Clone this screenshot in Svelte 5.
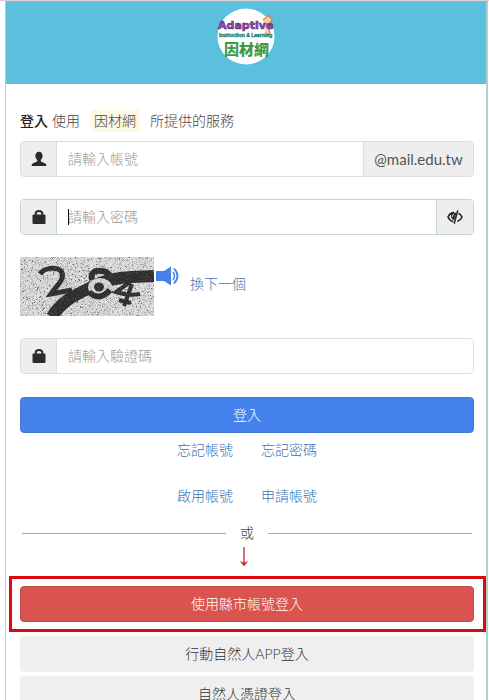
<script>
  let account = $state('');
  let password = $state('');
  let captcha = $state('');

  // Seeded speckle pattern behind and over the verification digits.
  function speckle(count, start) {
    let s = start;
    const next = () => (s = (s * 16807) % 2147483647) / 2147483647;
    for (let i = 0; i < 9; i++) next();
    let d = '';
    for (let i = 0; i < count; i++) {
      d += `M${Math.floor(next() * 134)} ${Math.floor(next() * 59)}h1v1h-1z`;
    }
    return d;
  }
  const layers = [
    { d: speckle(2600, 71), fill: '#c6c6c6' },
    { d: speckle(2400, 9917), fill: '#e6e6e6' },
    { d: speckle(500, 40503), fill: '#a6a6a6' }
  ];
  const darkDots = speckle(230, 8123);
  const inkDots = speckle(800, 55511);
</script>

{#snippet lock()}
  <svg width="14" height="16" viewBox="0 0 14 16" aria-hidden="true">
    <path d="M3.700 7V4.400Q3.700 1.900 7 1.900T10.300 4.400V7" fill="none" stroke="#2b2b2b" stroke-width="2" />
    <rect x="0.500" y="5.500" width="13" height="9.500" rx="1" fill="#2b2b2b" />
  </svg>
{/snippet}

<div class="page">
  <main class="card">
    <header>
      <svg width="60" height="58" viewBox="0 0 60 58" role="img" aria-label="因材網">
        <ellipse cx="30" cy="28.500" rx="28.500" ry="28" fill="#fff" />
        <path d="M47 12l5-4 4 3-2 4 2 3-3 3 1 4-4 3" fill="#f8cfaa" stroke="#dc8a50" stroke-width="1.400" />
        <text class="brand" x="2" y="21">Adaptive</text>
        <text class="tag" x="3" y="29">Instruction &amp; Learning</text>
        <text class="cjk" x="8" y="47">因材網</text>
      </svg>
    </header>

    <form onsubmit={(e) => e.preventDefault()}>
      <p class="intro"><b>登入</b><span>使用</span><mark>因材網</mark><span>所提供的服務</span></p>

      <div class="group">
        <label class="addon" for="account" aria-label="帳號">
          <svg width="16" height="16" viewBox="0 0 16 16" aria-hidden="true">
            <path d="M8 .8C10.300.8 11.700 2.500 11.600 5c-.1 1.900-.8 3.100-1.800 4v1.300c.7.8 2.500 1.100 4.100 2 1 .6 1.400 1.300 1.500 2.700H.6c.1-1.400.5-2.100 1.500-2.700 1.600-.9 3.400-1.200 4.100-2V9c-1-.9-1.700-2.100-1.800-4C4.300 2.500 5.700.8 8 .8z" fill="#2b2b2b" />
          </svg>
        </label>
        <input id="account" type="text" placeholder="請輸入帳號" bind:value={account} />
        <span class="domain">@mail.edu.tw</span>
      </div>

      <div class="group focused">
        <label class="addon" for="password" aria-label="密碼">{@render lock()}</label>
        <div class="field">
          <input id="password" type="password" placeholder="請輸入密碼" bind:value={password} />
          <i class="caret"></i>
        </div>
        <button class="eye" type="button" aria-label="顯示密碼">
          <svg width="16" height="14" viewBox="0 0 16 14" aria-hidden="true">
            <path d="M7 2.300C4.200 2.600 2.200 4.300 1 7c1.100 2.500 3 4.200 5.300 4.700M11.400 3.300C13.200 4.100 14.300 5.400 15 7c-.9 2.200-2.500 3.800-4.700 4.500" fill="none" stroke="#2b2b2b" stroke-width="1.700" />
            <path d="M4.300 3.200L9.500 2.500 7.300 10C4.500 10 3.300 6 4.300 3.200z" fill="#2b2b2b" />
            <path d="M5.300 6.800q0-2 1.700-2.300" stroke="#eee" fill="none" />
            <path d="M10.800.3L7.200 13.700" stroke="#2b2b2b" stroke-width="1.500" />
          </svg>
        </button>
      </div>

      <div class="captcha">
        <svg width="134" height="59" viewBox="0 0 134 59" role="img" aria-label="驗證碼">
          <rect width="134" height="59" fill="#d6d6d6" />
          {#each layers as l}<path d={l.d} fill={l.fill} />{/each}
          <path d={darkDots} fill="#666" />
          <g fill="none" stroke="#303030">
            <path d="M32 60C42 42 60 36 80 26 99 19 117 20 134 19" stroke-width="12" />
            <path d="M20 17C24 11 36 9 41 14 46 21 38 27 31 37L52 33" stroke-width="5" />
            <path d="M72 23C70 14 77 13 82 14 88 15 91 18 91 24" stroke-width="6" />
            <path d="M110 25L96 35Q108 39 120 37M112 27L104 49M99 43L111 46" stroke-width="4" />
          </g>
          <ellipse cx="80" cy="30" rx="12" ry="9" fill="#d6d6d6" />
          <path d="M69 35Q79 45 90 33" fill="none" stroke="#303030" stroke-width="6" />
          <ellipse cx="79" cy="30" rx="5" ry="4.500" fill="#303030" />
          <path d={inkDots} fill="#777" opacity="0.400" />
        </svg>
        <button class="sound" type="button" aria-label="播放驗證碼">
          <svg width="24" height="20" viewBox="0 0 24 20" aria-hidden="true">
            <path d="M0 5h8l7-4.500v19L8 15H0z" fill="#4581e8" />
            <path d="M17 6q3 4 0 8" fill="none" stroke="#4581e8" stroke-width="1.500" />
            <path d="M18 2.500q7 7.500 0 15" fill="none" stroke="#4581e8" stroke-width="1.800" />
          </svg>
        </button>
        <a href="#refresh">換下一個</a>
      </div>

      <div class="group">
        <label class="addon" for="captcha" aria-label="驗證碼">{@render lock()}</label>
        <input id="captcha" type="text" placeholder="請輸入驗證碼" bind:value={captcha} />
      </div>

      <button class="btn primary" type="submit">登入</button>

      <nav class="links">
        <a href="#forgot-account">忘記帳號</a><a href="#forgot-password">忘記密碼</a>
        <a href="#activate">啟用帳號</a><a href="#apply">申請帳號</a>
      </nav>

      <div class="or"><span>或</span></div>
      <svg class="arrow" width="18" height="20" viewBox="0 0 18 20" aria-hidden="true">
        <path d="M6 0V17" stroke="#c9252d" stroke-width="1.300" />
        <path d="M2.500 14.500L6 19l3.500-4.500L6 16z" fill="#c9252d" stroke="#c9252d" stroke-width="0.500" />
      </svg>
    </form>

    <div class="highlight"><button class="btn danger" type="button">使用縣市帳號登入</button></div>
    <div class="others">
      <button class="btn plain" type="button">行動自然人APP登入</button>
      <button class="btn plain" type="button">自然人憑證登入</button>
    </div>
  </main>
</div>

<style>
  :global(html) {
    scrollbar-width: none;
  }
  :global(body) {
    background: #fff;
  }
  .page,
  .page * {
    box-sizing: border-box;
  }
  .page {
    border-top: 1px solid #dccfd5;
    padding: 0 1px 0 5px;
    color: #444;
    font: 300 14px/20px Lato, 'Noto Sans CJK TC', sans-serif;
  }
  .card {
    border: 1px solid #b3cfd6;
    border-top-color: #8db8c6;
    border-right-width: 2px;
  }
  header {
    display: flex;
    justify-content: center;
    height: 82px;
    padding-top: 6px;
    background: #5bc0de;
  }
  .brand {
    font: bold 11px 'DejaVu Sans', sans-serif;
    fill: #8b4fae;
    stroke: #5a2b82;
    stroke-width: 0.6px;
  }
  .tag {
    font: bold 5px 'Liberation Sans', sans-serif;
    fill: #197e70;
    stroke: #197e70;
    stroke-width: 0.3px;
  }
  .cjk {
    font: 900 15px 'Noto Sans CJK TC', sans-serif;
    fill: #3c9a4d;
  }
  form {
    padding: 26px 12px 0 14px;
  }
  .intro {
    display: flex;
    align-items: center;
    margin: 0 0 9px;
    line-height: 22px;
  }
  .intro b {
    margin-right: 4px;
    font-weight: 500;
    color: #222;
  }
  mark {
    margin: 0 11px;
    padding: 0 3px;
    background: #fcf8e3;
    color: inherit;
  }
  .group {
    display: flex;
    height: 36px;
    margin-bottom: 22px;
    border: 1px solid #ddd;
    border-radius: 4px;
    overflow: hidden;
  }
  .focused {
    border-color: #c5d4da;
  }
  .addon,
  .domain,
  .eye {
    display: flex;
    flex: none;
    align-items: center;
    justify-content: center;
    background: #eee;
  }
  .addon {
    width: 36px;
    border-right: 1px solid #ddd;
  }
  .domain {
    width: 110px;
    border-left: 1px solid #ddd;
    font-size: 15px;
    font-weight: 400;
    color: #555;
  }
  .eye {
    width: 37px;
    padding: 0;
    border: 0;
    border-left: 1px solid #c5d4da;
  }
  .focused .addon {
    border-color: #c5d4da;
  }
  .field {
    position: relative;
    display: flex;
    flex: 1;
    min-width: 0;
  }
  input {
    flex: 1;
    min-width: 0;
    padding: 0 11px;
    border: 0;
    outline: 0;
    background: #fff;
    color: #444;
    font: inherit;
  }
  input::placeholder {
    color: #999;
    opacity: 1;
  }
  .caret {
    position: absolute;
    left: 11px;
    top: 9px;
    width: 1px;
    height: 16px;
    background: #111;
  }
  .captcha {
    display: flex;
    margin-bottom: 22px;
  }
  .captcha a {
    margin: 17px 0 0 10px;
  }
  .sound {
    height: 20px;
    margin: 9px 0 0 2px;
    padding: 0;
    border: 0;
    background: none;
  }
  a {
    color: #3f72ad;
    text-decoration: none;
  }
  .btn {
    display: block;
    width: 100%;
    height: 36px;
    padding: 0;
    border: 1px solid transparent;
    border-radius: 4px;
    font: inherit;
  }
  .primary {
    margin-top: 23px;
    background: #4582ec;
    border-color: #4379d4;
    color: #fff;
  }
  .danger {
    background: #d9534f;
    border-color: #bd4c4a;
    color: #fff;
  }
  .plain {
    margin-bottom: 4px;
    background: #efefef;
    color: #333;
  }
  .links {
    display: grid;
    grid-template-columns: auto auto;
    justify-content: center;
    gap: 26px 28px;
    margin-top: 7px;
  }
  .or {
    display: flex;
    align-items: center;
    margin: 17px 2px 0;
  }
  .or::before,
  .or::after {
    content: '';
    flex: 1;
    height: 1px;
    background: #aaa;
  }
  .or span {
    margin: 0 14px;
  }
  .arrow {
    display: block;
    margin: 4px auto 9px;
  }
  .highlight {
    margin: 0 0 4px 3px;
    padding: 7px 9px 7px 8px;
    border: 3px solid #d90b0e;
  }
  .others {
    padding: 0 12px 0 14px;
  }
</style>
